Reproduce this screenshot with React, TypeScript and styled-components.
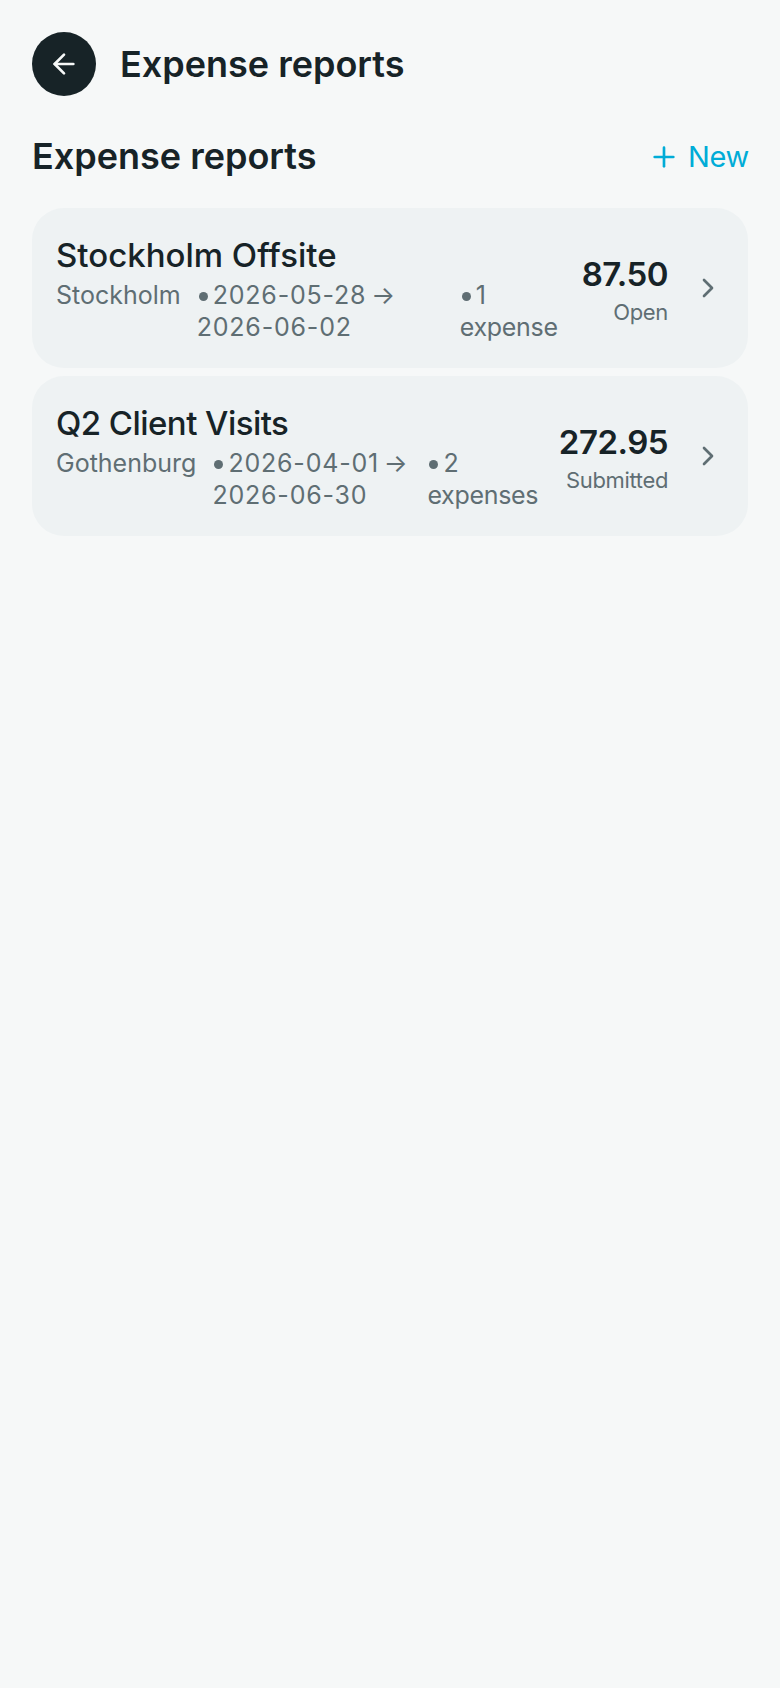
import * as React from 'react'
import styled, { createGlobalStyle } from 'styled-components'
import { ArrowLeft, ChevronRight, Plus } from 'lucide-react'

interface IReport {
	title: string
	tracking: number
	city: string
	cityWidth: number
	from: string
	to: string
	dateWidth: number
	count: string
	noun: string
	countWidth: number
	amount: string
	status: string
}

const GlobalStyle = createGlobalStyle`
	html, body {
		margin: 0;
		padding: 0;
		background: #f6f8f8;
	}
	body {
		font-family: Inter, "Open Sans", sans-serif;
		color: #172327;
	}
`

const Page = styled.div`
	min-height: 1688px;
	box-sizing: border-box;
	padding: 32px;
	background: #f6f8f8;
`

const TopBar = styled.header`
	display: flex;
	align-items: center;
	gap: 24px;
	height: 64px;
`

const BackButton = styled.button`
	width: 64px;
	height: 64px;
	padding: 0;
	border: 0;
	border-radius: 50%;
	background: #172327;
	color: #f6f8f8;
	display: flex;
	align-items: center;
	justify-content: center;
`

const PageTitle = styled.h1`
	margin: 0;
	font-size: 36px;
	line-height: 44px;
	font-weight: 600;
`

const SectionHead = styled.div`
	display: flex;
	align-items: center;
	justify-content: space-between;
	margin-top: 28px;
	height: 64px;
`

const SectionTitle = styled.h2`
	margin: 0;
	font-size: 36px;
	line-height: 44px;
	font-weight: 600;
`

const NewButton = styled.button`
	display: flex;
	align-items: center;
	gap: 8px;
	margin-right: -1px;
	padding: 2px 0 0;
	border: 0;
	background: none;
	color: #00acd7;
	font-family: inherit;
	font-size: 29px;
	line-height: 36px;
	font-weight: 400;
	letter-spacing: -0.3px;
`

const CardList = styled.div`
	display: flex;
	flex-direction: column;
	gap: 8px;
	margin-top: 20px;
`

const Card = styled.article`
	display: flex;
	align-items: center;
	height: 160px;
	box-sizing: border-box;
	padding: 0 24px;
	border-radius: 32px;
	background: #eef2f3;
`

const Info = styled.div`
	flex: 1;
	min-width: 0;
	padding-top: 2px;
`

const CardTitle = styled.div<{ $tracking: number }>`
	font-size: 33px;
	line-height: 40px;
	font-weight: 500;
	letter-spacing: ${p => p.$tracking}px;
`

const Meta = styled.div`
	display: flex;
	gap: 16px;
	margin-top: 4px;
	font-size: 25px;
	line-height: 32px;
	color: #5f6e73;
`

const MetaItem = styled.span<{ $width: number }>`
	flex: 0 0 ${p => p.$width}px;
`

const Dot = styled.i`
	display: inline-block;
	width: 9px;
	height: 9px;
	margin: 0 5px 0 2px;
	vertical-align: 3px;
	border-radius: 50%;
	background: #5f6e73;
`

const DateRange = styled.span`
	letter-spacing: 0.8px;
	word-spacing: -3px;
`

const Count = styled.span`
	letter-spacing: -0.3px;
`

const Totals = styled.div`
	flex: none;
	padding-top: 4px;
	text-align: right;
`

const Amount = styled.div`
	font-size: 33px;
	line-height: 40px;
	font-weight: 600;
	letter-spacing: -0.5px;
`

const Status = styled.div`
	margin-top: 4px;
	font-size: 22px;
	line-height: 28px;
	letter-spacing: -0.35px;
	color: #5f6e73;
`

const Chevron = styled(ChevronRight)`
	flex: none;
	margin-left: 24px;
	color: #5f6e73;
`

const reports: IReport[] = [
	{
		title: 'Stockholm Offsite',
		tracking: 0,
		city: 'Stockholm',
		cityWidth: 124,
		from: '2026-05-28',
		to: '2026-06-02',
		dateWidth: 247,
		count: '1',
		noun: 'expense',
		countWidth: 100,
		amount: '87.50',
		status: 'Open',
	},
	{
		title: 'Q2 Client Visits',
		tracking: -0.55,
		city: 'Gothenburg',
		cityWidth: 140,
		from: '2026-04-01',
		to: '2026-06-30',
		dateWidth: 199,
		count: '2',
		noun: 'expenses',
		countWidth: 110,
		amount: '272.95',
		status: 'Submitted',
	},
]

export default function App() {
	return (
		<Page>
			<GlobalStyle />
			<TopBar>
				<BackButton aria-label="Back">
					<ArrowLeft size={32} strokeWidth={2} />
				</BackButton>
				<PageTitle>Expense reports</PageTitle>
			</TopBar>
			<SectionHead>
				<SectionTitle>Expense reports</SectionTitle>
				<NewButton>
					<Plus size={32} strokeWidth={2} />
					New
				</NewButton>
			</SectionHead>
			<CardList>
				{reports.map(r => (
					<Card key={r.title}>
						<Info>
							<CardTitle $tracking={r.tracking}>{r.title}</CardTitle>
							<Meta>
								<MetaItem $width={r.cityWidth}>{r.city}</MetaItem>
								<MetaItem $width={r.dateWidth}>
									<Dot />
									<DateRange>
										{r.from} → {r.to}
									</DateRange>
								</MetaItem>
								<MetaItem $width={r.countWidth}>
									<Dot />
									<Count>
										{r.count} {r.noun}
									</Count>
								</MetaItem>
							</Meta>
						</Info>
						<Totals>
							<Amount>{r.amount}</Amount>
							<Status>{r.status}</Status>
						</Totals>
						<Chevron size={32} strokeWidth={2} />
					</Card>
				))}
			</CardList>
		</Page>
	)
}
